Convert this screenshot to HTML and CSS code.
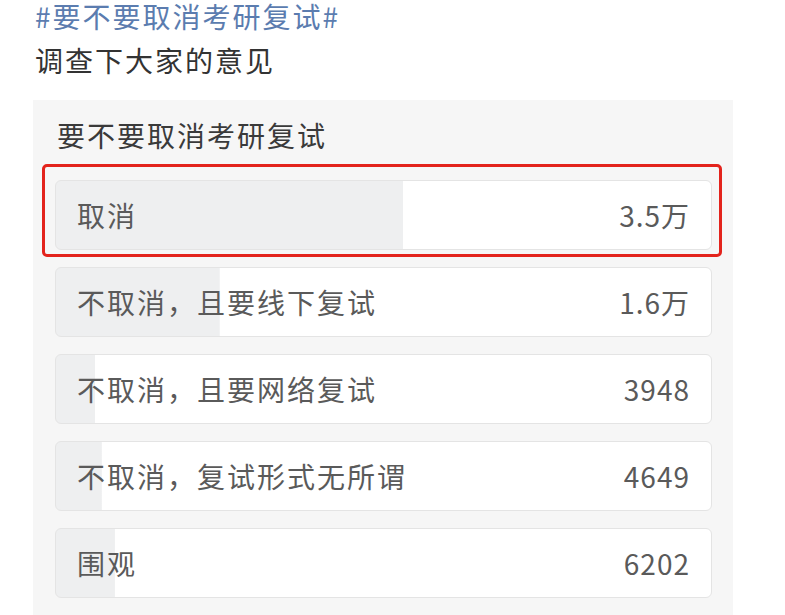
FILE: index.html
```html
<!DOCTYPE html>
<html lang="zh-CN">
<head>
    <meta charset="UTF-8">
    <meta name="viewport" content="width=device-width, initial-scale=1.0">
    <title>要不要取消考研复试</title>
    <link rel="stylesheet" href="styles.css">
</head>
<body>

<div class="post">
    <p class="topic">#要不要取消考研复试#</p>
    <p class="intro">调查下大家的意见</p>

    <!-- Poll card -->
    <div class="poll">
        <h2 class="poll-title">要不要取消考研复试</h2>

        <div class="highlight">
            <div class="option" style="background-size: 53% 100%">
                <span class="label">取消</span>
                <span class="count">3.5万</span>
            </div>
        </div>
        <div class="option" style="background-size: 25% 100%">
            <span class="label">不取消，且要线下复试</span>
            <span class="count">1.6万</span>
        </div>
        <div class="option" style="background-size: 6% 100%">
            <span class="label">不取消，且要网络复试</span>
            <span class="count">3948</span>
        </div>
        <div class="option" style="background-size: 7% 100%">
            <span class="label">不取消，复试形式无所谓</span>
            <span class="count">4649</span>
        </div>
        <div class="option" style="background-size: 9% 100%">
            <span class="label">围观</span>
            <span class="count">6202</span>
        </div>
    </div>
</div>

</body>
</html>
```

FILE: styles.css
```css
/* Global Styles */
body {
    margin: 0;
    background-color: #ffffff;
    font-family: "Noto Sans CJK SC", "Noto Sans", sans-serif;
    overflow: hidden;
}

.post {
    padding-left: 33px;
}

.topic,
.intro {
    margin: 0;
    padding-left: 2px;
    font-size: 28px;
    line-height: 40px;
    letter-spacing: 2px;
}

.topic {
    line-height: 32px;
    margin-bottom: 8px;
    color: #5b7caf;
}

.intro {
    color: #333333;
}

/* Poll Styles */
.poll {
    width: 657px;
    margin-top: 20px;
    padding: 14px 21px 20px 22px;
    background-color: #f6f6f6;
}

.poll-title {
    margin: 0 0 24px 2px;
    font-size: 28px;
    font-weight: normal;
    line-height: 42px;
    letter-spacing: 2px;
    color: #3a3a3a;
}

.highlight {
    position: relative;
}

/* red annotation frame */
.highlight::after {
    content: '';
    position: absolute;
    top: -16px;
    right: -10px;
    bottom: -7px;
    left: -13px;
    border: 3px solid #e3231c;
    border-radius: 5px;
}

.option {
    display: flex;
    align-items: center;
    justify-content: space-between;
    box-sizing: border-box;
    height: 70px;
    margin-top: 17px;
    padding: 0 21px 0 21px;
    border: 1px solid #e4e4e4;
    border-radius: 6px;
    background: #ffffff linear-gradient(#eeeff0, #eeeff0) no-repeat;
    font-size: 28px;
    letter-spacing: 2px;
    color: #5a5a5a;
}

.highlight .option {
    margin-top: 0;
}

.count {
    letter-spacing: 1px;
}
```
